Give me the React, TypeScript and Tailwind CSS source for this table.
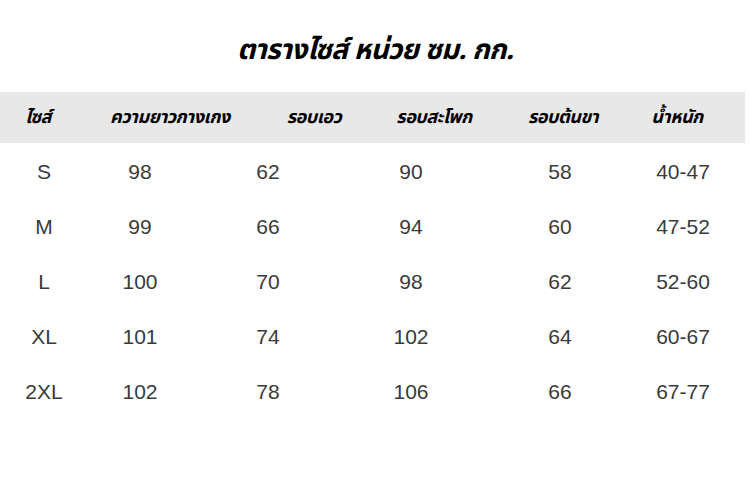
const headers = [
  { label: "ไซส์", w: "w-[76px]" },
  { label: "ความยาวกางเกง", w: "w-[188px]" },
  { label: "รอบเอว", w: "w-[100px]" },
  { label: "รอบสะโพก", w: "w-[140px]" },
  { label: "รอบต้นขา", w: "w-[118px]" },
  { label: "น้ำหนัก", w: "w-[110px]" },
];

const colWidths = ["w-[88px]", "w-[104px]", "w-[152px]", "w-[134px]", "w-[164px]", "w-[82px]"];

const rows = [
  ["S", "98", "62", "90", "58", "40-47"],
  ["M", "99", "66", "94", "60", "47-52"],
  ["L", "100", "70", "98", "62", "52-60"],
  ["XL", "101", "74", "102", "64", "60-67"],
  ["2XL", "102", "78", "106", "66", "67-77"],
];

export default function App() {
  return (
    <div className="w-[750px] h-[493px] bg-white overflow-hidden">
      <div className="h-[92px] flex items-center justify-center pt-[10px]">
        <h1 className="text-[28px] font-bold italic text-black [font-family:'Noto_Sans_Thai','Noto_Sans','Liberation_Sans',sans-serif] tracking-tight">
          ตารางไซส์ หน่วย ซม. กก.
        </h1>
      </div>

      <div className="w-[745px] h-[51px] bg-[#e8e8e8] flex items-center">
        {headers.map((h) => (
          <div
            key={h.label}
            className={`${h.w} text-center text-[18px] font-bold italic text-black [font-family:'Noto_Sans_Thai','Noto_Sans','Liberation_Sans',sans-serif] tracking-tight`}
          >
            {h.label}
          </div>
        ))}
      </div>

      <div className="pt-[1px]">
        {rows.map((r) => (
          <div key={r[0]} className="h-[55px] flex items-center">
            {r.map((v, i) => (
              <div
                key={i}
                className={`${colWidths[i]} text-center text-[21px] text-[#3a3a3a] [font-family:'Liberation_Sans',Arial,sans-serif]`}
              >
                {v}
              </div>
            ))}
          </div>
        ))}
      </div>
    </div>
  );
}
